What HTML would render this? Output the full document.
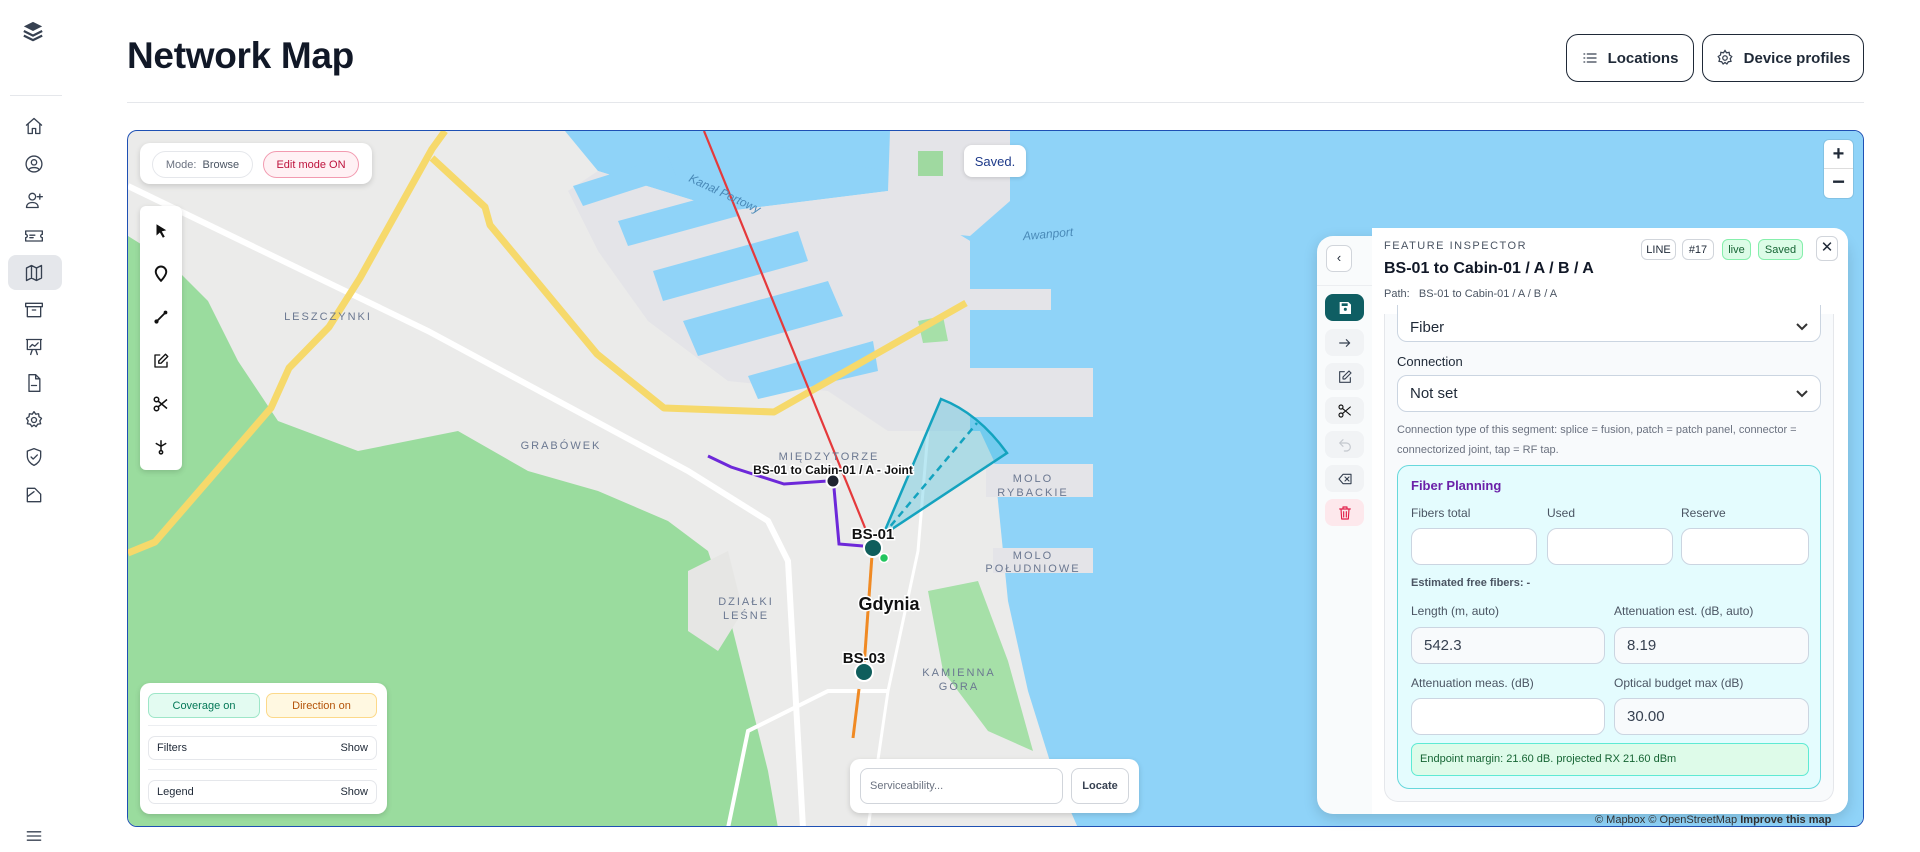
<!DOCTYPE html>
<html><head><meta charset="utf-8"><style>
*{box-sizing:border-box;margin:0;padding:0}
body{width:1920px;height:852px;background:#fff;font-family:"Liberation Sans",sans-serif;color:#1f2937;position:relative;overflow:hidden}
.a{position:absolute}
.ic{position:absolute;left:24px;width:20px;height:20px;fill:none;stroke:#374151;stroke-width:1.6;stroke-linecap:round;stroke-linejoin:round}
.btn{position:absolute;border:1.5px solid #1f2937;border-radius:12px;background:#fff;font-size:15px;font-weight:bold;display:flex;align-items:center;justify-content:center;gap:10px;color:#1f2937}
.pill{position:absolute;border-radius:14px;font-size:11px;display:flex;align-items:center;justify-content:center}
.tb svg{position:absolute;left:12px;width:18px;height:18px}
.rb{position:absolute;left:1325px;width:39px;height:27px;border-radius:8px;background:#f1f3f5;display:flex;align-items:center;justify-content:center}
.rb svg{width:16px;height:16px;fill:none;stroke:#374151;stroke-width:1.7;stroke-linecap:round;stroke-linejoin:round}
.badge{position:absolute;top:239px;height:21px;border:1px solid #d1d5db;border-radius:6px;font-size:11px;display:flex;align-items:center;justify-content:center;background:#fff}
.inp{position:absolute;height:37px;border:1px solid #cbd5e1;border-radius:10px;background:#f8fafc;font-size:15px;padding-left:12px;display:flex;align-items:center;color:#374151}
.lbl{position:absolute;font-size:12px;color:#4b5563}
</style></head><body>

<!-- sidebar -->
<svg class="a" style="left:22px;top:20px;width:22px;height:22px" viewBox="0 0 24 24"><path d="M12 2 2 7l10 5 10-5z" fill="#374151"/><path d="M2 12l10 5 10-5M2 17l10 5 10-5" fill="none" stroke="#374151" stroke-width="2.4" stroke-linejoin="round"/></svg>
<div class="a" style="left:10px;top:95px;width:52px;height:1px;background:#e5e7eb"></div>
<div class="a" style="left:8px;top:255px;width:54px;height:35px;border-radius:8px;background:#e5e7eb"></div>
<svg class="ic" style="top:116px" viewBox="0 0 24 24"><path d="M3 11 12 3l9 8M5 9.5V21h5v-6h4v6h5V9.5"/></svg>
<svg class="ic" style="top:154px" viewBox="0 0 24 24"><circle cx="12" cy="12" r="9.5"/><circle cx="12" cy="10" r="3.2"/><path d="M6 18.5c2-3 10-3 12 0"/></svg>
<svg class="ic" style="top:190px" viewBox="0 0 24 24"><circle cx="10" cy="8" r="4"/><path d="M3 21c0-4 3-6 7-6s7 2 7 6zM19 5v6M16 8h6"/></svg>
<svg class="ic" style="top:226px" viewBox="0 0 24 24"><path d="M2 6h20v4a2 2 0 0 0 0 4v4H2v-4a2 2 0 0 0 0-4zM7 11h6M7 14h4"/></svg>
<svg class="ic" style="top:263px" viewBox="0 0 24 24"><path d="M3 6l6-3 6 3 6-3v15l-6 3-6-3-6 3zM9 3v15M15 6v15"/></svg>
<svg class="ic" style="top:300px" viewBox="0 0 24 24"><path d="M2 4h20v4H2zM4 8v12h16V8M10 12h4"/></svg>
<svg class="ic" style="top:337px" viewBox="0 0 24 24"><path d="M3 3h18M4 3v12h16V3M7 12l3-3 3 2 4-4M8 21l2-6M16 21l-2-6"/></svg>
<svg class="ic" style="top:373px" viewBox="0 0 24 24"><path d="M6 2h8l5 5v15H6zM14 2v5h5M9 15h6"/></svg>
<svg class="ic" style="top:410px" viewBox="0 0 24 24"><circle cx="12" cy="12" r="3"/><path d="M12 2l2 3 3.5-.5.5 3.5 3 2-2 3 1 3.5-3.5.5-2 3-2.5-2-2.5 2-2-3-3.5-.5 1-3.5-2-3 3-2 .5-3.5L10 5z"/></svg>
<svg class="ic" style="top:447px" viewBox="0 0 24 24"><path d="M12 2l8 3v6c0 5-3.5 9-8 11-4.5-2-8-6-8-11V5zM8.5 12l2.5 2.5 5-5"/></svg>
<svg class="ic" style="top:485px" viewBox="0 0 24 24"><path d="M4 4h9l7 7v9H4zM4 14l8-6"/></svg>
<svg class="ic" style="top:826px" viewBox="0 0 24 24"><path d="M4 7h16M4 12h16M4 17h16"/></svg>

<!-- header -->
<div class="a" style="left:127px;top:35px;font-size:37px;font-weight:bold;color:#111827;letter-spacing:-0.3px">Network Map</div>
<div class="a" style="left:127px;top:102px;width:1737px;height:1px;background:#e5e7eb"></div>
<div class="btn" style="left:1566px;top:34px;width:128px;height:48px"><svg width="16" height="16" viewBox="0 0 24 24" fill="none" stroke="#374151" stroke-width="2" stroke-linecap="round"><path d="M8 6h13M8 12h13M8 18h13M3 6h1M3 12h1M3 18h1"/></svg>Locations</div>
<div class="btn" style="left:1702px;top:34px;width:162px;height:48px"><svg width="18" height="18" viewBox="0 0 24 24" fill="none" stroke="#374151" stroke-width="1.7"><circle cx="12" cy="12" r="3"/><path d="M12 2l2 3 3.5-.5.5 3.5 3 2-2 3 1 3.5-3.5.5-2 3-2.5-2-2.5 2-2-3-3.5-.5 1-3.5-2-3 3-2 .5-3.5L10 5z"/></svg>Device profiles</div>

<!-- map -->
<div class="a" style="left:127px;top:130px;width:1737px;height:697px;border:1.5px solid #1e50b4;border-radius:10px;overflow:hidden;background:#ebebea">
<svg width="1737" height="697" viewBox="0 0 1737 697" style="position:absolute;left:0;top:0" font-family="Liberation Sans">
<polygon fill="#8fd3f8" points="437,0 1737,0 1737,697 950,697 925,640 900,560 880,470 866,330 852,300 842,300 842,110 760,60 600,80 470,40"/>
<polygon fill="#e4e4e8" points="762,0 882,0 882,70 842,105 790,100 760,60"/>
<polygon fill="#9fd9a0" points="790,20 815,20 815,45 790,45"/>
<polygon fill="#e4e4e8" points="842,158 923,158 923,179 842,179"/>
<polygon fill="#e4e4e8" points="842,237 965,237 965,286 842,286"/>
<polygon fill="#e4e4e8" points="858,333 965,333 965,366 858,366"/>
<polygon fill="#e4e4e8" points="865,417 965,417 965,442 865,442"/>
<polygon fill="#e4e4e8" points="470,40 600,80 760,60 842,110 842,300 760,300 700,260 600,250 520,190 470,120 440,60"/>
<polygon fill="#8fd3f8" points="445,55 540,25 548,45 455,75"/>
<polygon fill="#8fd3f8" points="490,90 600,60 610,85 500,115"/>
<polygon fill="#8fd3f8" points="525,140 670,100 680,130 535,170"/>
<polygon fill="#8fd3f8" points="555,190 700,150 715,185 570,225"/>
<polygon fill="#8fd3f8" points="620,245 745,210 750,240 630,268"/>
<polygon fill="#8fd3f8" points="600,0 760,0 760,40 700,30"/>
<polygon fill="#9adc9e" points="0,105 40,130 80,170 110,230 150,290 230,320 330,300 400,340 470,360 540,390 580,420 600,480 620,560 640,640 650,697 0,697"/>
<polygon fill="#a6e0a8" points="800,460 850,450 880,530 905,620 860,600 815,540"/>
<polygon fill="#a6e0a8" points="790,190 815,185 820,210 795,212"/>
<polygon fill="#e6e6e4" points="560,440 600,420 615,480 590,520 560,500"/>
<polyline fill="none" stroke="#fff" stroke-width="6" points="0,55 300,200 560,340 640,390 660,430 675,697"/>
<polyline fill="none" stroke="#fff" stroke-width="4" points="600,697 620,600 700,560 760,560"/>
<polyline fill="none" stroke="#fff" stroke-width="3" points="740,697 760,560 790,420 800,300"/>
<polyline fill="none" stroke="#f6d96b" stroke-width="7" stroke-linejoin="round" points="0,422 27,411 143,277 161,237 201,196 232,147 304,18 317,0"/>
<polyline fill="none" stroke="#f6d96b" stroke-width="7" stroke-linejoin="round" points="304,27 357,76 362,94 469,223 536,277 646,281 771,210 838,172"/>
<line x1="576" y1="0" x2="744" y2="414" stroke="#e5393b" stroke-width="2.2"/>
<polyline fill="none" stroke="#6d28d9" stroke-width="3" points="580,325 603,336 656,353 700,350"/>
<polyline fill="none" stroke="#6d28d9" stroke-width="3" points="706,357 711,413 735,415"/>
<polyline fill="none" stroke="#f08a24" stroke-width="3" points="744,424 736,536"/>
<polyline fill="none" stroke="#f08a24" stroke-width="3" points="731,558 725,607"/>
<path d="M755,404 L813,268 Q850,282 879,322 Z" fill="rgba(60,190,220,0.35)" stroke="#14a3bf" stroke-width="2.5"/>
<line x1="755" y1="404" x2="849" y2="292" stroke="#14a3bf" stroke-width="2.5" stroke-dasharray="7,5"/>
<circle cx="705" cy="350" r="6.5" fill="#1f2430" stroke="#fff" stroke-width="2"/>
<circle cx="745" cy="417" r="9" fill="#0f5e5c" stroke="#fff" stroke-width="2"/>
<circle cx="756" cy="427" r="4.5" fill="#22c55e" stroke="#fff" stroke-width="1.5"/>
<circle cx="736" cy="541" r="9" fill="#0f5e5c" stroke="#fff" stroke-width="2"/>
<g font-weight="bold" fill="#111" stroke="#fff" stroke-width="3" paint-order="stroke" text-anchor="middle">
<text x="745" y="408" font-size="15">BS-01</text>
<text x="736" y="532" font-size="15">BS-03</text>
<text x="705" y="343" font-size="12">BS-01 to Cabin-01 / A - Joint</text>
<text x="761" y="479" font-size="18">Gdynia</text>
</g>
<g font-size="11" fill="#6b7891" letter-spacing="2" text-anchor="middle">
<text x="701" y="329">MIĘDZYTORZE</text>
<text x="905" y="351">MOLO</text><text x="905" y="365">RYBACKIE</text>
<text x="905" y="428">MOLO</text><text x="905" y="441">POŁUDNIOWE</text>
<text x="831" y="545">KAMIENNA</text><text x="831" y="559">GÓRA</text>
<text x="618" y="474">DZIAŁKI</text><text x="618" y="488">LEŚNE</text>
<text x="433" y="318">GRABÓWEK</text>
<text x="200" y="189">LESZCZYNKI</text>
</g>
<text x="920" y="107" font-size="12" fill="#4a8ab8" font-style="italic" text-anchor="middle" transform="rotate(-5 920 103)">Awanport</text>
<text x="560" y="50" font-size="12" fill="#4a8ab8" font-style="italic" transform="rotate(25 560 50)">Kanał Portowy</text>
<text x="1467" y="692" font-size="11" fill="#333">© Mapbox © OpenStreetMap <tspan font-weight="bold">Improve this map</tspan></text>
</svg>
</div>

<!-- mode panel -->
<div class="a" style="left:140px;top:143px;width:232px;height:41px;background:#fff;border-radius:10px;box-shadow:0 2px 6px rgba(0,0,0,.15)"></div>
<div class="pill" style="left:152px;top:151px;width:101px;height:27px;border:1px solid #e5e7eb;color:#6b7280">Mode:&nbsp;&nbsp;<b style="color:#4b5563;font-weight:normal">Browse</b></div>
<div class="pill" style="left:263px;top:151px;width:96px;height:27px;border:1px solid #f29bb0;background:#fff1f4;color:#be123c">Edit mode ON</div>

<!-- toolbar -->
<div class="a tb" style="left:140px;top:206px;width:42px;height:264px;background:#fff;border-radius:6px;box-shadow:0 2px 6px rgba(0,0,0,.15)">
<svg style="top:16px" viewBox="0 0 24 24"><path d="M6 3l13 8-6 1.5 4 7-2.5 1.5-4-7L6 18z" fill="#111"/></svg>
<svg style="top:59px" viewBox="0 0 24 24"><path d="M12 21s-7-7-7-12a7 7 0 0 1 14 0c0 5-7 12-7 12z" fill="none" stroke="#111" stroke-width="2.6"/></svg>
<svg style="top:102px" viewBox="0 0 24 24"><path d="M6 18 18 6" stroke="#111" stroke-width="2.5"/><circle cx="6" cy="18" r="2.8" fill="#111"/><circle cx="18" cy="6" r="2.5" fill="#111"/></svg>
<svg style="top:146px" viewBox="0 0 24 24" fill="none" stroke="#111" stroke-width="1.8" stroke-linejoin="round"><path d="M11 4H4v16h16v-7M18 3l3 3-9 9H9v-3z"/></svg>
<svg style="top:189px" viewBox="0 0 24 24" fill="none" stroke="#111" stroke-width="2"><circle cx="6" cy="6" r="3"/><circle cx="6" cy="18" r="3"/><path d="M8 8l12 10M8 16 20 6"/></svg>
<svg style="top:232px" viewBox="0 0 24 24" fill="none" stroke="#111" stroke-width="2"><path d="M12 3v14M5 7l7 4 7-4"/><circle cx="12" cy="19" r="2.2"/></svg>
</div>

<div class="pill" style="left:964px;top:145px;width:62px;height:32px;background:#fff;border-radius:8px;color:#1e3a8a;font-size:13px;box-shadow:0 1px 4px rgba(0,0,0,.15)">Saved.</div>

<div class="a" style="left:1824px;top:140px;width:29px;height:58px;background:#fff;border-radius:5px;box-shadow:0 0 0 1px rgba(0,0,0,.08)">
<div style="height:29px;border-bottom:1px solid #ddd;text-align:center;font-size:20px;font-weight:bold;line-height:28px">+</div>
<div style="text-align:center;font-size:22px;font-weight:bold;line-height:26px">−</div></div>

<!-- bottom left panel -->
<div class="a" style="left:140px;top:683px;width:247px;height:131px;background:#fff;border-radius:10px;box-shadow:0 2px 6px rgba(0,0,0,.15)"></div>
<div class="pill" style="left:148px;top:693px;width:112px;height:25px;border-radius:7px;background:#e3fbf1;border:1px solid #9ee6c8;color:#047857">Coverage on</div>
<div class="pill" style="left:266px;top:693px;width:111px;height:25px;border-radius:7px;background:#fff8e1;border:1px solid #fcd98a;color:#b45309">Direction on</div>
<div class="a" style="left:148px;top:725px;width:229px;height:1px;background:#eceef1"></div>
<div class="a" style="left:148px;top:736px;width:229px;height:24px;border:1px solid #e5e7eb;border-radius:7px;font-size:11px;display:flex;justify-content:space-between;align-items:center;padding:0 8px"><span>Filters</span><span>Show</span></div>
<div class="a" style="left:148px;top:769px;width:229px;height:1px;background:#eceef1"></div>
<div class="a" style="left:148px;top:780px;width:229px;height:24px;border:1px solid #e5e7eb;border-radius:7px;font-size:11px;display:flex;justify-content:space-between;align-items:center;padding:0 8px"><span>Legend</span><span>Show</span></div>

<!-- serviceability -->
<div class="a" style="left:850px;top:759px;width:289px;height:54px;background:#fff;border-radius:10px;box-shadow:0 2px 6px rgba(0,0,0,.15)"></div>
<div class="a" style="left:860px;top:768px;width:203px;height:36px;border:1px solid #d1d5db;border-radius:8px;font-size:11px;color:#6b7280;padding-left:9px;line-height:34px">Serviceability...</div>
<div class="a" style="left:1071px;top:768px;width:58px;height:36px;border:1px solid #d1d5db;border-radius:8px;font-size:11px;font-weight:bold;text-align:center;line-height:34px;color:#374151">Locate</div>

<!-- inspector -->
<div class="a" style="left:1317px;top:236px;width:531px;height:578px;background:#f9fbfc;border-radius:16px;box-shadow:0 4px 14px rgba(0,0,0,.15)"></div>
<div class="a" style="left:1372px;top:228px;width:476px;height:86px;background:#fff;border-radius:0 14px 0 0;box-shadow:0 1px 0 #eef0f2"></div>
<div class="a" style="left:1372px;top:314px;width:476px;height:500px;background:#fff;border-radius:0 0 16px 0"></div>
<div class="a" style="left:1326px;top:245px;width:26px;height:27px;border:1px solid #d1d5db;border-radius:7px;background:#fff;text-align:center;line-height:24px;font-size:13px">‹</div>
<div class="a" style="left:1317px;top:285px;width:55px;height:1px;background:#eceef1"></div>
<div class="a" style="left:1384px;top:240px;font-size:11px;letter-spacing:1.5px;color:#4b5563">FEATURE INSPECTOR</div>
<div class="a" style="left:1384px;top:260px;font-size:16px;font-weight:bold;color:#111827">BS-01 to Cabin-01 / A / B / A</div>
<div class="a" style="left:1384px;top:288px;font-size:11px;color:#4b5563">Path:&nbsp;&nbsp; BS-01 to Cabin-01 / A / B / A</div>
<div class="badge" style="left:1641px;width:35px">LINE</div>
<div class="badge" style="left:1682px;width:32px">#17</div>
<div class="badge" style="left:1722px;width:29px;background:#dcfce7;border-color:#86efac;color:#166534">live</div>
<div class="badge" style="left:1758px;width:45px;background:#dcfce7;border-color:#86efac;color:#166534">Saved</div>
<div class="a" style="left:1816px;top:236px;width:22px;height:25px;border:1px solid #d1d5db;border-radius:6px;text-align:center;line-height:22px;font-size:15px">✕</div>

<div class="rb" style="top:294px;background:#0f5e63"><svg viewBox="0 0 24 24" style="stroke:none"><path d="M4 3h13l4 4v14H4z" fill="#fff"/><circle cx="12.5" cy="14" r="2.3" fill="#0f5e63"/><rect x="7" y="5" width="9" height="4" fill="#0f5e63"/></svg></div>
<div class="rb" style="top:329px"><svg viewBox="0 0 24 24"><path d="M4 12h15M14 7l5 5-5 5"/></svg></div>
<div class="rb" style="top:363px"><svg viewBox="0 0 24 24"><path d="M11 4H4v16h16v-7M18 3l3 3-9 9H9v-3z"/></svg></div>
<div class="rb" style="top:397px"><svg viewBox="0 0 24 24" style="stroke:#111"><circle cx="6" cy="6" r="3"/><circle cx="6" cy="18" r="3"/><path d="M8 8l12 10M8 16 20 6"/></svg></div>
<div class="rb" style="top:431px"><svg viewBox="0 0 24 24" style="stroke:#c4c8ce"><path d="M9 14 4 9l5-5M4 9h10a6 6 0 0 1 0 12h-3"/></svg></div>
<div class="rb" style="top:465px"><svg viewBox="0 0 24 24"><path d="M21 5H9l-6 7 6 7h12zM12 9l6 6M18 9l-6 6"/></svg></div>
<div class="rb" style="top:499px;background:#fde8ec"><svg viewBox="0 0 24 24" style="stroke:#e11d48"><path d="M4 6h16M9 6V3h6v3M6 6l1 15h10l1-15M10 10v8M14 10v8"/></svg></div>

<div class="a" style="left:1384px;top:300px;width:450px;height:502px;border:1px solid #e5e7eb;border-top:none;border-radius:0 0 14px 14px;background:#f8fafc"></div>
<div class="a" style="left:1372px;top:300px;width:476px;height:14px;background:#fff"></div>
<div class="a" style="left:1397px;top:305px;width:424px;height:37px;border:1px solid #cbd5e1;border-top:none;border-radius:0 0 10px 10px;background:#fff;font-size:15px;padding:0 12px;display:flex;justify-content:space-between;align-items:center"><span style="padding-top:8px">Fiber</span><svg width="12" height="8" viewBox="0 0 12 8" style="margin-top:8px"><path d="M1 1l5 5 5-5" fill="none" stroke="#333" stroke-width="2"/></svg></div>
<div class="a" style="left:1397px;top:354px;font-size:13px;color:#1f2937">Connection</div>
<div class="a" style="left:1397px;top:375px;width:424px;height:37px;border:1px solid #cbd5e1;border-radius:10px;background:#fff;font-size:15px;padding:0 12px;display:flex;justify-content:space-between;align-items:center"><span>Not set</span><svg width="12" height="8" viewBox="0 0 12 8"><path d="M1 1l5 5 5-5" fill="none" stroke="#333" stroke-width="2"/></svg></div>
<div class="a" style="left:1397px;top:420px;width:428px;font-size:11px;line-height:20px;color:#6b7280">Connection type of this segment: splice = fusion, patch = patch panel, connector = connectorized joint, tap = RF tap.</div>

<div class="a" style="left:1397px;top:465px;width:424px;height:324px;border:1px solid #67d8dc;border-radius:12px;background:#e4fcfe"></div>
<div class="a" style="left:1411px;top:478px;font-size:13px;font-weight:bold;color:#6b21a8">Fiber Planning</div>
<div class="lbl" style="left:1411px;top:506px">Fibers total</div>
<div class="lbl" style="left:1547px;top:506px">Used</div>
<div class="lbl" style="left:1681px;top:506px">Reserve</div>
<div class="inp" style="left:1411px;top:528px;width:126px;background:#fff"></div>
<div class="inp" style="left:1547px;top:528px;width:126px;background:#fff"></div>
<div class="inp" style="left:1681px;top:528px;width:128px;background:#fff"></div>
<div class="a" style="left:1411px;top:577px;font-size:11px;font-weight:bold;color:#4b5563">Estimated free fibers: -</div>
<div class="lbl" style="left:1411px;top:604px">Length (m, auto)</div>
<div class="lbl" style="left:1614px;top:604px">Attenuation est. (dB, auto)</div>
<div class="inp" style="left:1411px;top:627px;width:194px">542.3</div>
<div class="inp" style="left:1614px;top:627px;width:195px">8.19</div>
<div class="lbl" style="left:1411px;top:676px">Attenuation meas. (dB)</div>
<div class="lbl" style="left:1614px;top:676px">Optical budget max (dB)</div>
<div class="inp" style="left:1411px;top:698px;width:194px;background:#fff"></div>
<div class="inp" style="left:1614px;top:698px;width:195px">30.00</div>
<div class="a" style="left:1411px;top:743px;width:398px;height:33px;border:1px solid #5eead4;border-radius:7px;background:#defbe9;font-size:11px;color:#166534;padding-left:8px;line-height:31px">Endpoint margin: 21.60 dB. projected RX 21.60 dBm</div>
</body></html>
